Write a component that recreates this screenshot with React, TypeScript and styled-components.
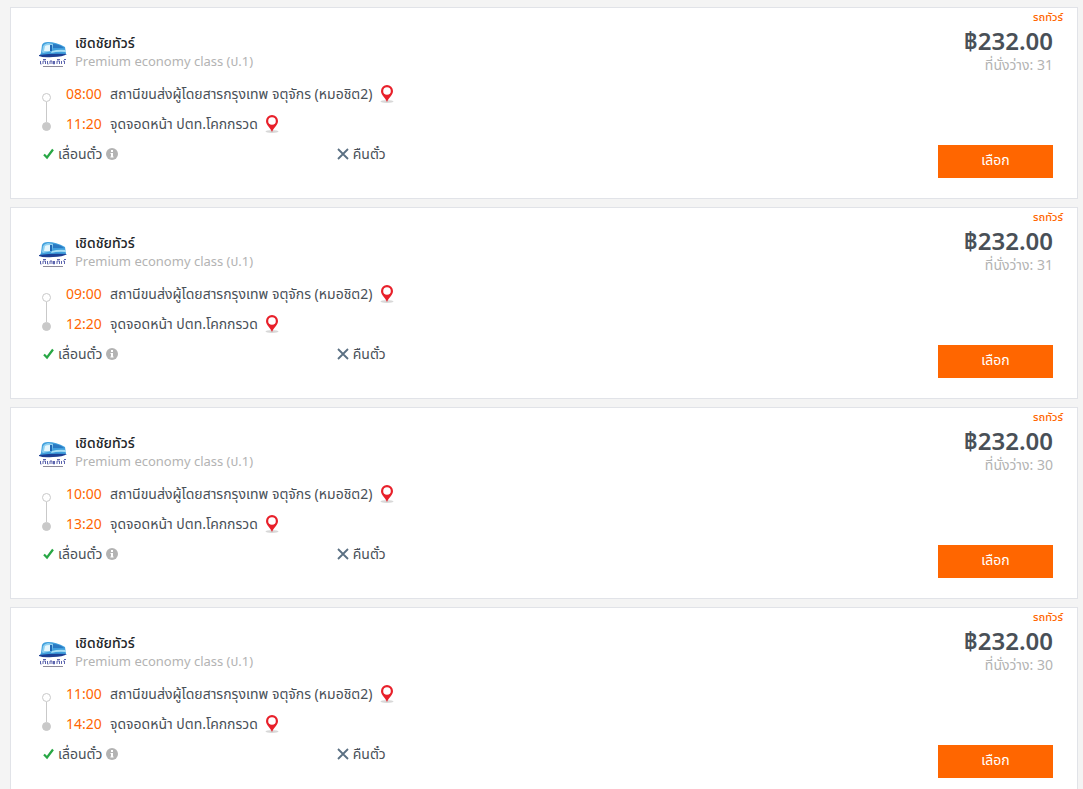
import React from 'react';
import styled, { createGlobalStyle } from 'styled-components';

const GlobalStyle = createGlobalStyle`
  * { box-sizing: border-box; }
  body {
    margin: 0;
    background: #f4f4f4;
    color: #495057;
    font-family: "Noto Sans", "Noto Sans Thai", sans-serif;
    font-size: 14px;
    line-height: 18px;
  }
`;

const TripList = styled.main`
  display: flex;
  flex-direction: column;
  gap: 8px;
  padding: 7px 5px 8px 10px;
`;

const Card = styled.article`
  display: flex;
  justify-content: space-between;
  min-height: 192px;
  background: #fff;
  border: 1px solid #e1e3e8;
`;

const Details = styled.div`
  flex: 1;
  padding: 26px 0 0 28px;
`;

const Operator = styled.header`
  display: flex;
  gap: 8px;
  margin-bottom: 8px;
`;

const Logo = styled.svg`
  flex: none;
  width: 28px;
  height: 28px;
  margin-top: 6px;
`;

const OperatorName = styled.h2`
  margin: 0;
  color: #212529;
  font-size: 14px;
  line-height: 18px;
  font-weight: 500;
`;

const TravelClass = styled.p`
  margin: 0;
  color: #b3b3b3;
  font-size: 13px;
  line-height: 19px;
`;

const Route = styled.div`
  display: flex;
  gap: 15px;
  padding-left: 3px;
`;

const Track = styled.div`
  display: flex;
  flex-direction: column;
  align-items: center;
  width: 9px;
  height: 38px;
  margin-top: 14px;
`;

const Dot = styled.span<{ $filled?: boolean }>`
  width: 9px;
  height: 9px;
  border: 1px solid #c9c9c9;
  border-radius: 50%;
  background: ${(p) => (p.$filled ? '#c9c9c9' : '#fff')};
`;

const Line = styled.span`
  flex: 1;
  width: 1px;
  background: #c9c9c9;
`;

const Stops = styled.ol`
  margin: 0;
  padding: 0;
  list-style: none;
`;

const Stop = styled.li`
  display: flex;
  align-items: center;
  height: 30px;
`;

const Time = styled.time`
  width: 44px;
  color: #ff6600;
`;

const PinLink = styled.a`
  display: flex;
  margin-left: 7px;
`;

const Policies = styled.div`
  display: flex;
  padding-left: 4px;
`;

const Policy = styled.div`
  display: flex;
  align-items: center;
  gap: 4px;
  width: 37%;
  height: 30px;
`;

const Booking = styled.div`
  display: flex;
  flex-direction: column;
  align-items: flex-end;
  width: 240px;
  padding: 0 24px 20px 0;
`;

const VehicleType = styled.span`
  margin-right: -10px;
  color: #ff6600;
  font-size: 11px;
  line-height: 18px;
  font-weight: 500;
`;

const Price = styled.strong`
  color: #495057;
  font-size: 24px;
  line-height: 30px;
  font-weight: 600;
`;

const Seats = styled.span`
  color: #b3b3b3;
`;

const SelectButton = styled.button`
  width: 115px;
  height: 33px;
  margin-top: auto;
  padding: 0 0 3px;
  border: 0;
  background: #ff6600;
  color: #fff;
  font: inherit;
  cursor: pointer;
`;

const BusLogo = () => (
  <Logo viewBox="0 0 28 28" role="img" aria-label="เชิดชัยทัวร์">
    <path d="M2 13 L3 5 Q4 2 9 2 Q17 2 26 7 L27 14 Q14 17 1 15 Z" fill="#3f9fdd" />
    <path d="M3 12 L4 6 Q5 4 9 3 L14 4 L13 11 L4 13 Z" fill="#8fd0f0" />
    <path d="M5 11 L6 6 Q7 5 11 5 L11 11 Z" fill="#e4f6fd" />
    <path d="M14 4 Q20 4 25 8 L14 8 Z" fill="#2b79c2" />
    <path d="M11 5 L13 5 L13 11 L11 11 Z" fill="#1f68b5" />
    <path d="M13 11 Q19 9 27 10 L27 12 Q19 11 12 13 Z" fill="#a9def5" />
    <path d="M0 15 Q14 13 28 14 Q24 17 14 17 Q4 18 0 16 Z" fill="#1c3f94" />
    <g fill="none" stroke="#5a63ad" strokeWidth="1">
      <path d="M1.500 21v3h1M4 24v-3h2.500v3M4 19.500h3M8.500 21v3h1M11 24v-3h2v3M14.500 21v3h1v-3M18 24v-3h2.500v3M18 19.500h3M22.500 21v3M24 21h1.500v3M25 19.500h2" />
    </g>
    <path d="M4 26.500h20" stroke="#8d8998" strokeWidth="1" />
  </Logo>
);

const PinIcon = () => (
  <svg width="14" height="20" viewBox="0 0 14 20" aria-hidden="true">
    <ellipse cx="7" cy="17.500" rx="6.500" ry="1.500" fill="#d8d8d8" />
    <path
      fillRule="evenodd"
      d="M7 1a6 6 0 0 0-6 6c0 4 4 6 6 11 2-5 6-7 6-11a6 6 0 0 0-6-6zm0 2.200a3.800 3.800 0 1 1 0 7.600 3.800 3.800 0 0 1 0-7.600z"
      fill="#e8202a"
    />
  </svg>
);

const CheckIcon = () => (
  <svg width="11" height="12" viewBox="0 0 11 12" aria-hidden="true">
    <path d="M1 6.500 L4 9.500 L10 1.500" fill="none" stroke="#28a745" strokeWidth="2.200" />
  </svg>
);

const CrossIcon = () => (
  <svg width="12" height="12" viewBox="0 0 12 12" aria-hidden="true">
    <path d="M1 1 L11 11 M11 1 L1 11" stroke="#5b7083" strokeWidth="1.800" />
  </svg>
);

const InfoIcon = () => (
  <svg width="12" height="12" viewBox="0 0 12 12" aria-hidden="true">
    <circle cx="6" cy="6" r="6" fill="#b3b3b3" />
    <path d="M5 2h2v2H5zM4.500 5H7v3.500h.6v1H4.400v-1H5V6h-.5z" fill="#fff" />
  </svg>
);

type Trip = { depart: string; arrive: string; seats: number };

const trips: Trip[] = [
  { depart: '08:00', arrive: '11:20', seats: 31 },
  { depart: '09:00', arrive: '12:20', seats: 31 },
  { depart: '10:00', arrive: '13:20', seats: 30 },
  { depart: '11:00', arrive: '14:20', seats: 30 },
];

const StopRow = ({ time, place }: { time: string; place: string }) => (
  <Stop>
    <Time>{time}</Time>
    <span>{place}</span>
    <PinLink href="#map" aria-label={place}>
      <PinIcon />
    </PinLink>
  </Stop>
);

const TripCard = ({ depart, arrive, seats }: Trip) => (
  <Card>
    <Details>
      <Operator>
        <BusLogo />
        <div>
          <OperatorName>เชิดชัยทัวร์</OperatorName>
          <TravelClass>Premium economy class (ป.1)</TravelClass>
        </div>
      </Operator>
      <Route>
        <Track>
          <Dot />
          <Line />
          <Dot $filled />
        </Track>
        <Stops>
          <StopRow time={depart} place="สถานีขนส่งผู้โดยสารกรุงเทพ จตุจักร (หมอชิต2)" />
          <StopRow time={arrive} place="จุดจอดหน้า ปตท.โคกกรวด" />
        </Stops>
      </Route>
      <Policies>
        <Policy>
          <CheckIcon />
          <span>เลื่อนตั๋ว</span>
          <InfoIcon />
        </Policy>
        <Policy>
          <CrossIcon />
          <span>คืนตั๋ว</span>
        </Policy>
      </Policies>
    </Details>
    <Booking>
      <VehicleType>รถทัวร์</VehicleType>
      <Price>฿232.00</Price>
      <Seats>ที่นั่งว่าง: {seats}</Seats>
      <SelectButton type="button">เลือก</SelectButton>
    </Booking>
  </Card>
);

export default function App() {
  return (
    <>
      <GlobalStyle />
      <TripList>
        {trips.map((trip) => (
          <TripCard key={trip.depart} {...trip} />
        ))}
      </TripList>
    </>
  );
}
